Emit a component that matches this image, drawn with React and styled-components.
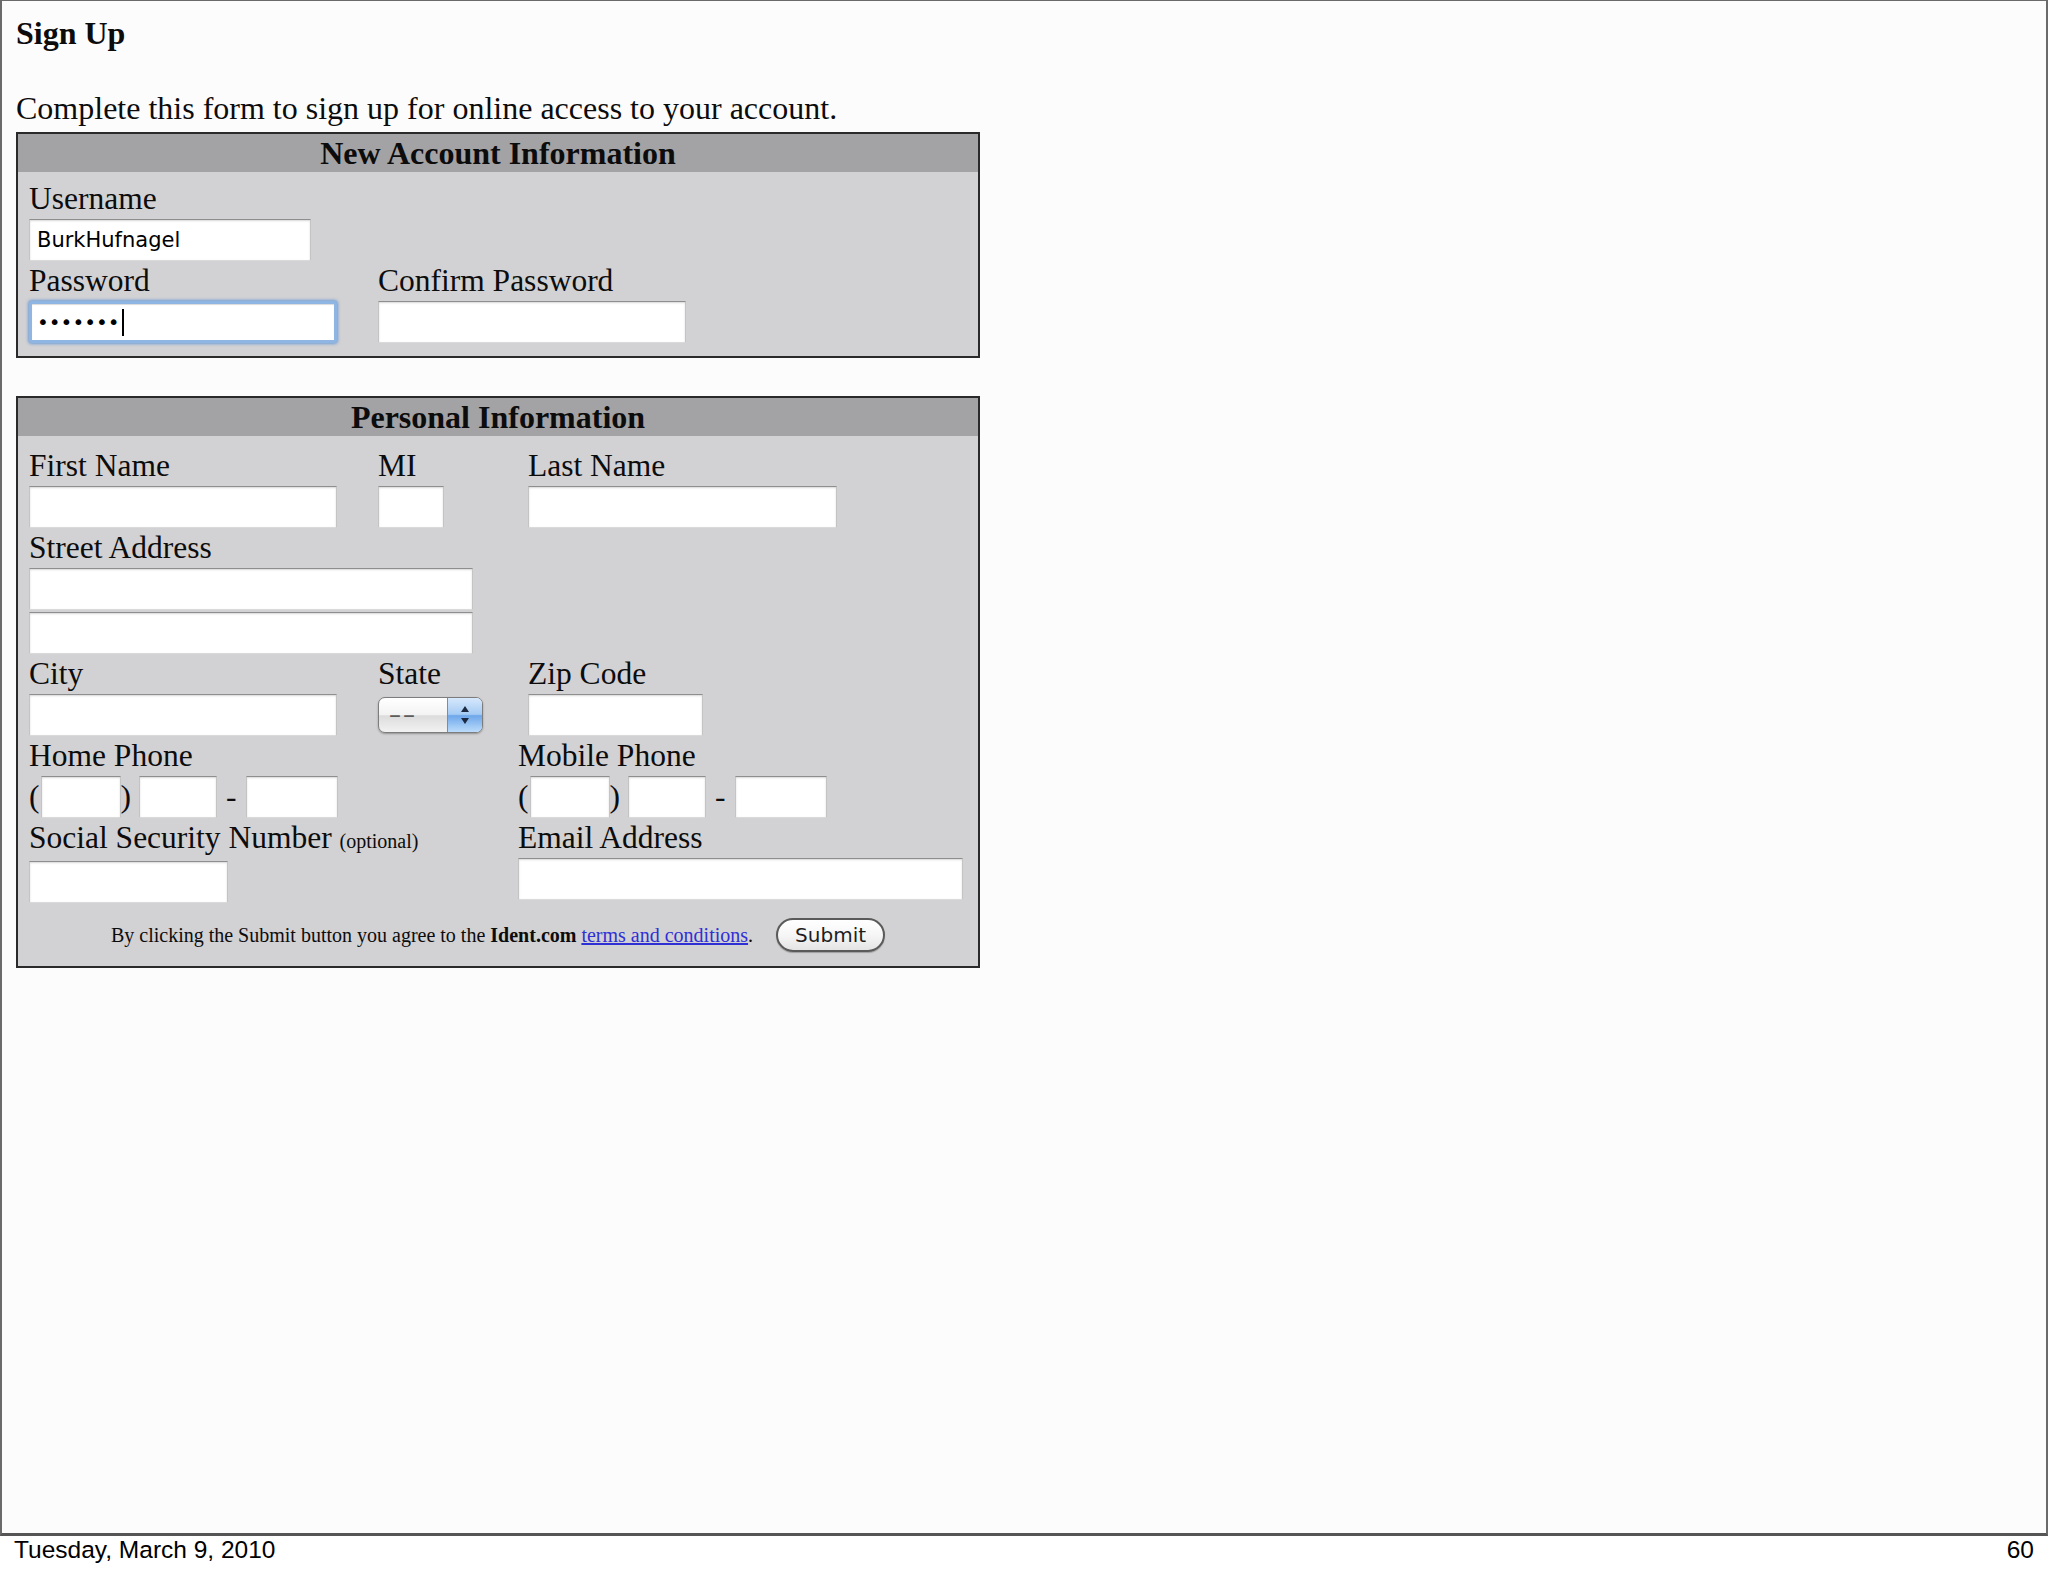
import React from "react"
import styled, { createGlobalStyle, css } from "styled-components"

const GlobalStyle = createGlobalStyle`
    html, body {
        margin: 0;
        padding: 0;
        background: #fdfcfd;
    }
    body {
        font-family: "Liberation Serif", "Times New Roman", serif;
        color: #0c0c0c;
    }
`

const Slide = styled.div`
    box-sizing: border-box;
    height: 1536px;
    border: 2px solid #6a6a6a;
    border-top-width: 1px;
    border-bottom: 3px solid #555;
    padding: 12px 14px 0;
    background: #fdfcfd;
`
const Title = styled.h1`
    margin: 0;
    font-size: 32px;
    line-height: 40px;
    font-weight: bold;
`
const Intro = styled.p`
    margin: 35px 0 4px;
    font-size: 32px;
    line-height: 40px;
`
const Panel = styled.section`
    box-sizing: border-box;
    width: 964px;
    margin-top: ${props => props.$spaced ? "38px" : "0"};
    border: 2px solid #2a2a2a;
    background: #d2d1d3;
`
const PanelHead = styled.h2`
    margin: 0;
    height: 38px;
    line-height: 38px;
    background: #a3a2a4;
    text-align: center;
    font-size: 32px;
    font-weight: bold;
`
const PanelBody = styled.div`
    padding: ${props => props.$top || 7}px 11px ${props => props.$bottom || 11}px;
`
const Grid = styled.div`
    display: grid;
    grid-template-columns: 349px 140px 1fr;
`
const Row = styled.div`
    display: flex;
`
const Field = styled.div`
    position: relative;
    width: ${props => props.$w ? props.$w + "px" : "auto"};
    margin-left: ${props => props.$indent ? "10px" : "0"};
    grid-column: ${props => props.$span || "auto"};
`
const Label = styled.label`
    display: block;
    font-size: 31.5px;
    line-height: 40px;
    white-space: nowrap;
`
const Note = styled.span`
    font-size: 20px;
`
const TextBox = styled.input`
    display: block;
    box-sizing: border-box;
    width: ${props => props.$w}px;
    height: 42px;
    margin: ${props => props.$stack ? "2px 0 0" : "0"};
    padding: 0 7px;
    background: #fff;
    border: 1px solid;
    border-color: #8e8e8e #c4c4c4 #dadada #c4c4c4;
    box-shadow: inset 0 1px 2px rgba(0, 0, 0, .16);
    font: 21px "DejaVu Sans", sans-serif;
    color: #000;
    outline: none;
    ${props => props.$focus && css`
        padding: 0 5px;
        border: 3px solid #8fb6e2;
        border-radius: 3px;
        font-size: 20px;
        box-shadow: 0 0 3px 1px #6e9dd6, inset 0 1px 1px rgba(0, 0, 0, .15);
    `}
`
const Caret = styled.span`
    position: absolute;
    left: 93px;
    top: 48px;
    width: 2px;
    height: 27px;
    background: #000;
`
const PhoneRow = styled.div`
    display: flex;
    align-items: center;
    height: 42px;
`
const Punct = styled.span`
    font-size: 31.5px;
    line-height: 42px;
    margin: ${props => props.$m || "0"};
`
const SelectWrap = styled.div`
    position: relative;
    width: 105px;
    height: 36px;
    margin-top: 3px;
`
const Select = styled.select`
    appearance: none;
    box-sizing: border-box;
    width: 105px;
    height: 36px;
    padding: 0 0 0 10px;
    border: 1px solid #7d7d7d;
    border-radius: 7px;
    background: linear-gradient(#ffffff, #f3f3f3 50%, #dcdcdc 52%, #f2f2f2);
    box-shadow: 0 1px 2px rgba(0, 0, 0, .3);
    font: 24px "DejaVu Sans", sans-serif;
    letter-spacing: 2px;
    color: #5c5c5c;
`
const SelectCap = styled.span`
    position: absolute;
    top: 1px;
    right: 1px;
    bottom: 1px;
    width: 34px;
    border-left: 1px solid #6d8fbd;
    border-radius: 0 6px 6px 0;
    background: linear-gradient(#d6e8fc, #a6cbf4 48%, #6ea7ea 52%, #bcdcfb);
    pointer-events: none;
    display: flex;
    align-items: center;
    justify-content: center;
`
const FootRow = styled.div`
    grid-column: 1 / -1;
    display: flex;
    justify-content: center;
    align-items: center;
    gap: 23px;
    margin: 15px 0 3px;
    font-size: 20px;
`
const Terms = styled.a`
    color: #2f2fd6;
    text-decoration: underline;
`
const SubmitButton = styled.button`
    box-sizing: border-box;
    width: 109px;
    height: 34px;
    padding: 0;
    border: 2px solid #5a5a5a;
    border-radius: 17px;
    background: linear-gradient(#ffffff, #f6f6f6 50%, #e4e4e4);
    box-shadow: 0 1px 1px rgba(0, 0, 0, .25);
    font: 20px "DejaVu Sans", sans-serif;
    color: #1e1e1e;
`
const Footer = styled.footer`
    display: flex;
    justify-content: space-between;
    height: 40px;
    line-height: 38px;
    padding: 0 14px;
    font: 24.5px "Liberation Sans", Arial, sans-serif;
    color: #000;
    background: #fff;
`

function Phone() {
    return (
        <PhoneRow>
            <Punct $m="0 1px 0 0">(</Punct>
            <TextBox $w={80} />
            <Punct $m="0 8px 0 0">)</Punct>
            <TextBox $w={78} />
            <Punct $m="0 9px">-</Punct>
            <TextBox $w={92} />
        </PhoneRow>
    )
}

export default function App() {
    return (
        <>
            <GlobalStyle />
            <Slide>
                <Title>Sign Up</Title>
                <Intro>Complete this form to sign up for online access to your account.</Intro>

                <Panel>
                    <PanelHead>New Account Information</PanelHead>
                    <PanelBody $top={7} $bottom={13}>
                        <Field>
                            <Label>Username</Label>
                            <TextBox $w={282} defaultValue="BurkHufnagel" />
                        </Field>
                        <Row>
                            <Field $w={349}>
                                <Label>Password</Label>
                                <TextBox $w={308} $focus type="password" defaultValue="secret1" />
                                <Caret />
                            </Field>
                            <Field>
                                <Label>Confirm Password</Label>
                                <TextBox $w={308} type="password" />
                            </Field>
                        </Row>
                    </PanelBody>
                </Panel>

                <Panel $spaced>
                    <PanelHead>Personal Information</PanelHead>
                    <PanelBody $top={10} $bottom={11}>
                        <Grid>
                            <Field>
                                <Label>First Name</Label>
                                <TextBox $w={308} />
                            </Field>
                            <Field>
                                <Label>MI</Label>
                                <TextBox $w={66} />
                            </Field>
                            <Field $indent>
                                <Label>Last Name</Label>
                                <TextBox $w={309} />
                            </Field>

                            <Field $span="1 / -1">
                                <Label>Street Address</Label>
                                <TextBox $w={444} />
                                <TextBox $w={444} $stack />
                            </Field>

                            <Field>
                                <Label>City</Label>
                                <TextBox $w={308} />
                            </Field>
                            <Field>
                                <Label>State</Label>
                                <SelectWrap>
                                    <Select defaultValue="">
                                        <option value="">––</option>
                                    </Select>
                                    <SelectCap>
                                        <svg width="12" height="22" viewBox="0 0 12 22">
                                            <path d="M6 2 L10 8 L2 8 Z" fill="#1c2940" />
                                            <path d="M2 14 L10 14 L6 20 Z" fill="#1c2940" />
                                        </svg>
                                    </SelectCap>
                                </SelectWrap>
                            </Field>
                            <Field $indent>
                                <Label>Zip Code</Label>
                                <TextBox $w={175} />
                            </Field>

                            <Field $span="1 / 3">
                                <Label>Home Phone</Label>
                                <Phone />
                            </Field>
                            <Field>
                                <Label>Mobile Phone</Label>
                                <Phone />
                            </Field>

                            <Field $span="1 / 3">
                                <Label>Social Security Number <Note>(optional)</Note></Label>
                                <TextBox $w={199} />
                            </Field>
                            <Field>
                                <Label>Email Address</Label>
                                <TextBox $w={445} />
                            </Field>

                            <FootRow>
                                <span>
                                    By clicking the Submit button you agree to the <b>Ident.com</b>{" "}
                                    <Terms href="#">terms and conditions</Terms>.
                                </span>
                                <SubmitButton type="button">Submit</SubmitButton>
                            </FootRow>
                        </Grid>
                    </PanelBody>
                </Panel>
            </Slide>
            <Footer>
                <span>Tuesday, March 9, 2010</span>
                <span>60</span>
            </Footer>
        </>
    )
}
